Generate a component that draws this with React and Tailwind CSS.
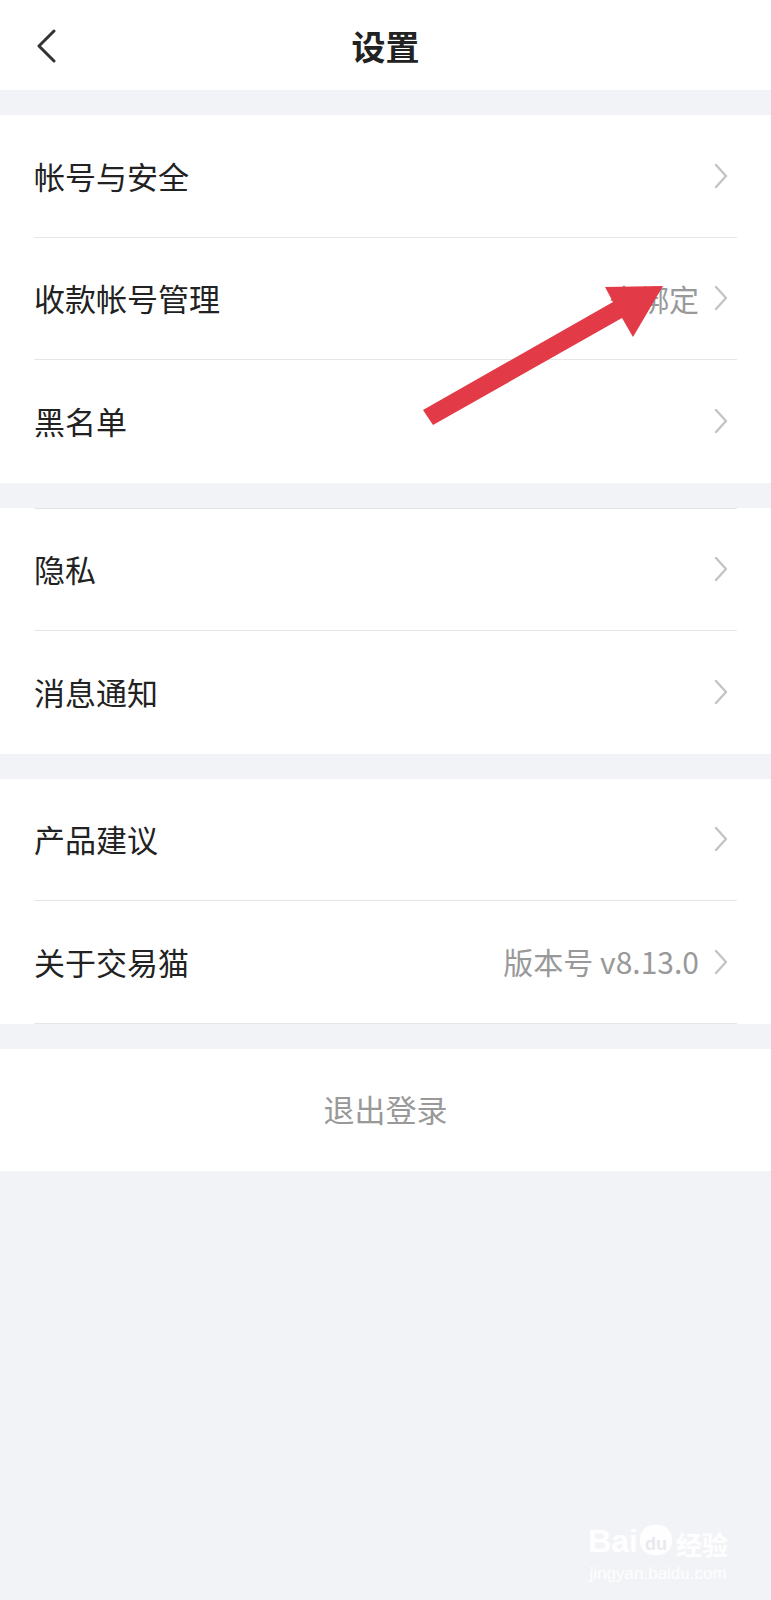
import React from "react";

const FONT = { fontFamily: '"Noto Sans CJK SC", "Noto Sans", sans-serif' };

const sections = [
  [
    { label: "帐号与安全" },
    { label: "收款帐号管理", value: "未绑定" },
    { label: "黑名单" },
  ],
  [{ label: "隐私" }, { label: "消息通知" }],
  [{ label: "产品建议" }, { label: "关于交易猫", value: "版本号 v8.13.0" }],
];

const Chevron = () => (
  <svg width="16" height="28" viewBox="0 0 16 28" fill="none" className="shrink-0">
    <path d="M3 3 L13 14 L3 25" stroke="#c4c4c4" strokeWidth="2.4" strokeLinecap="round" strokeLinejoin="round" />
  </svg>
);

const Row = ({ label, value, last }) => (
  <div className="px-[34px]">
    <div
      className={
        "flex items-center justify-between h-[122.5px] " +
        (last ? "" : "border-b border-[#e6e6e6]")
      }
    >
      <span className="text-[31px] text-[#222]">{label}</span>
      <div className="flex items-center gap-[14px] pr-[8px]">
        {value && <span className="text-[30px] text-[#999]">{value}</span>}
        <Chevron />
      </div>
    </div>
  </div>
);

export default function App() {
  return (
    <div className="relative min-h-[1600px] flex flex-col bg-[#f2f3f6]" style={FONT}>
      {/* header */}
      <header className="relative h-[90px] bg-white flex items-center justify-center">
        <button className="absolute left-[34px] top-[29px]">
          <svg width="26" height="34" viewBox="0 0 26 34" fill="none">
            <path d="M20 2 L5 17 L20 32" stroke="#333" strokeWidth="3" strokeLinecap="round" strokeLinejoin="round" />
          </svg>
        </button>
        <h1 className="text-[34px] font-semibold text-[#222]">设置</h1>
      </header>

      <div className="mt-[25px] flex flex-col gap-[25px]">
        {sections.map((rows, i) => (
          <section key={i} className="bg-white">
            {i === 1 && <div className="mx-[34px] border-t border-[#e6e6e6]" />}
            {rows.map((r, j) => (
              <Row key={r.label} {...r} last={j === rows.length - 1 && i !== 2} />
            ))}
          </section>
        ))}

        <button className="bg-white h-[122px] flex items-center justify-center text-[31px] text-[#999]">
          退出登录
        </button>
      </div>

      {/* watermark */}
      <div className="flex-1 flex items-end justify-end pr-[43px] pb-[18px]">
        <div className="flex flex-col items-center text-white/90 leading-none select-none">
          <div className="flex items-end gap-[2px]">
            <span className="text-[32px] font-bold" style={{ fontFamily: '"Liberation Sans", sans-serif' }}>Bai</span>
            <span className="text-[18px] font-bold bg-white/90 text-[#e8e9ee] rounded-[14px] px-[5px] pt-[10px] pb-[2px] mb-[2px]" style={{ fontFamily: '"Liberation Sans", sans-serif' }}>du</span>
            <span className="text-[26px] font-bold ml-[2px]">经验</span>
          </div>
          <span className="text-[17px] mt-[8px]" style={{ fontFamily: '"Liberation Sans", sans-serif' }}>jingyan.baidu.com</span>
        </div>
      </div>

      {/* annotation arrow */}
      <svg className="absolute left-0 top-0 pointer-events-none" width="771" height="600" viewBox="0 0 771 600">
        <polygon points="423,410 433,425 622,318 633,337 663,286 605,287 613,302" fill="#e33a47" />
      </svg>
    </div>
  );
}
